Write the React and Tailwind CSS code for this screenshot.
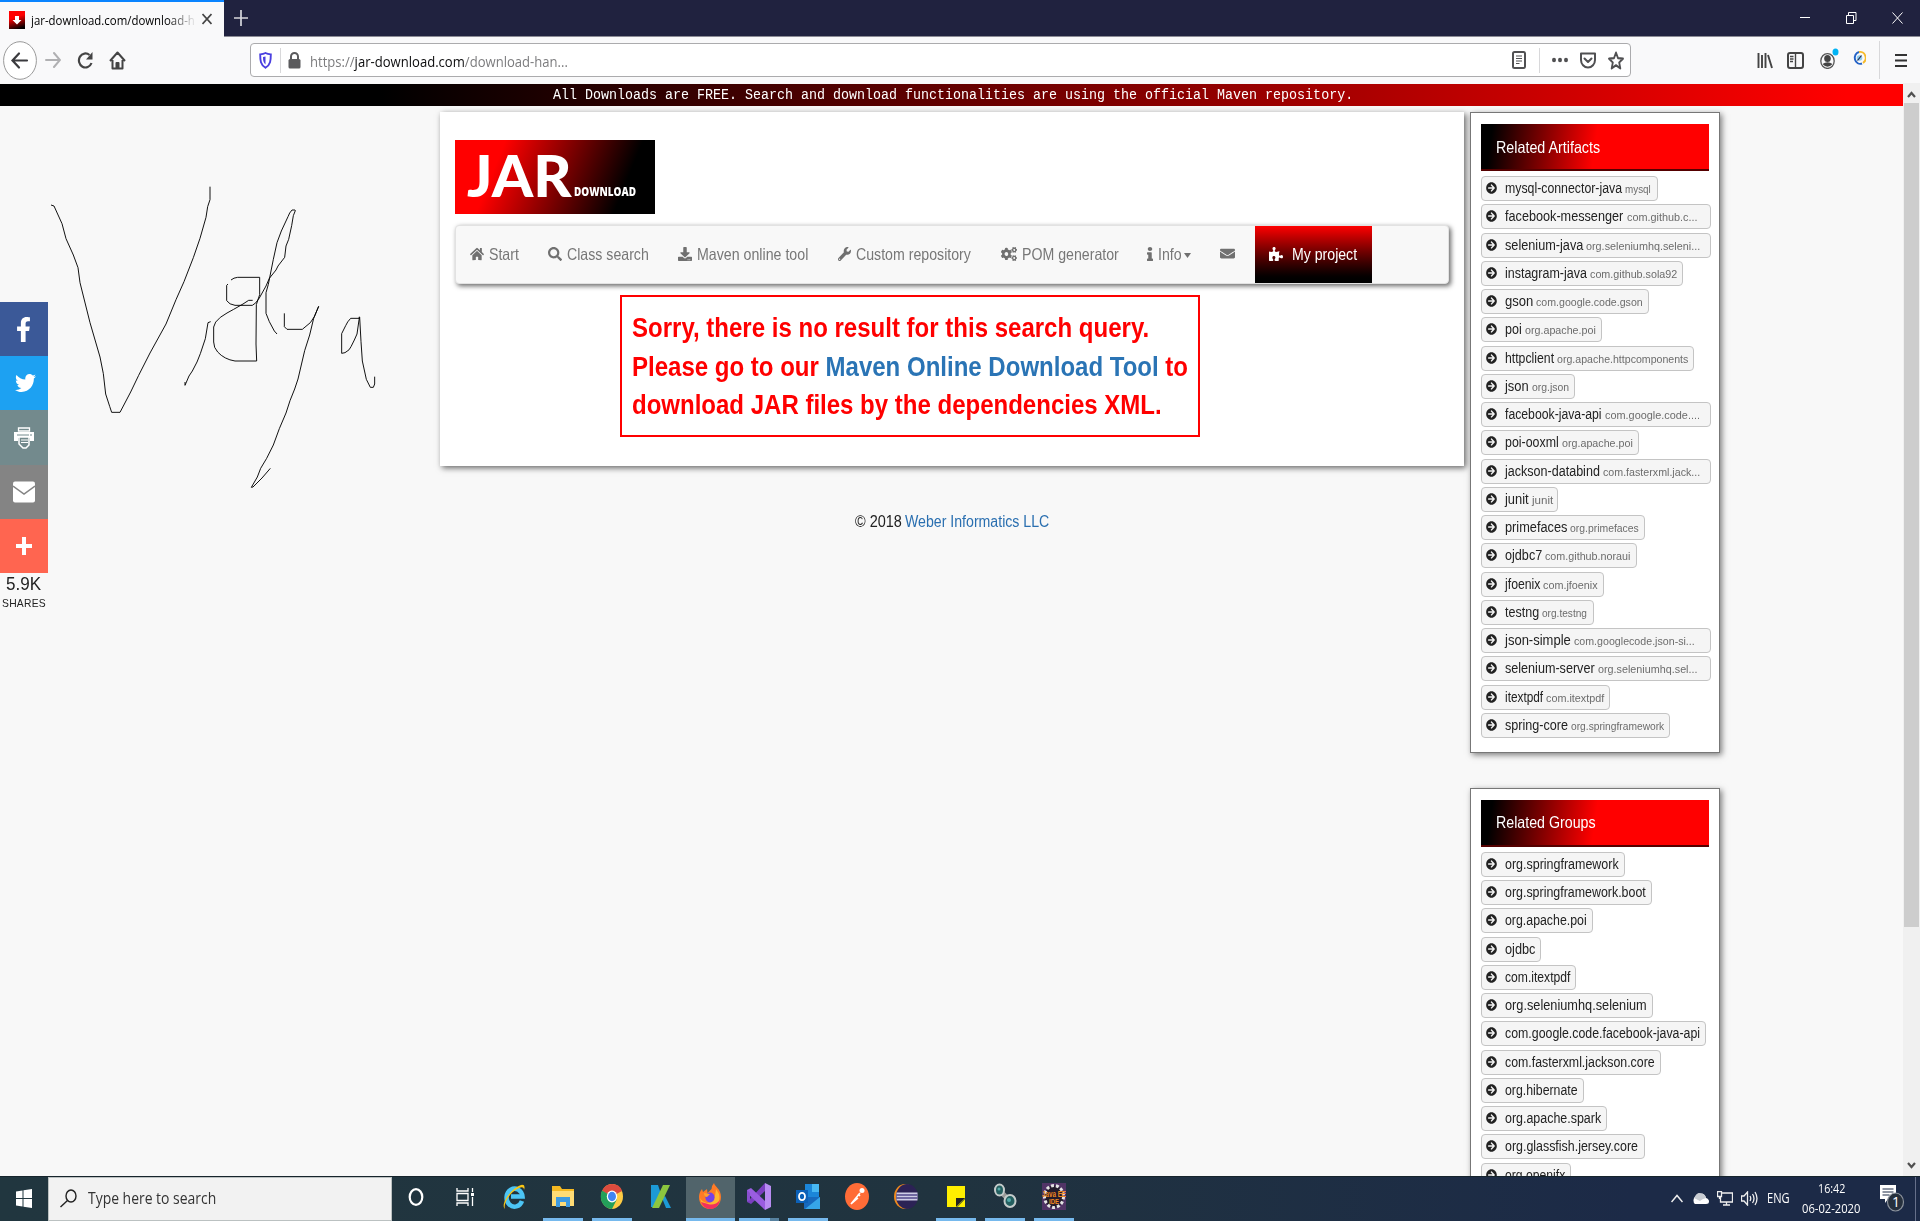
import React, { useLayoutEffect, useRef, useState } from "react";
import {
  FaHome, FaSearch, FaDownload, FaWrench, FaCogs, FaInfo,
  FaEnvelope, FaPuzzlePiece, FaArrowCircleRight, FaFacebookF, FaTwitter,
} from "react-icons/fa";

// Single line of text condensed or stretched to an exact width.
function T({ w, className = "", children }) {
  const ref = useRef(null);
  const [k, setK] = useState(1);
  useLayoutEffect(() => {
    if (ref.current) setK(w / ref.current.offsetWidth);
  }, [w]);
  return (
    <span className={"inline-block shrink-0 whitespace-nowrap " + className} style={{ width: w }}>
      <span ref={ref} className="inline-block origin-left whitespace-nowrap" style={{ transform: `scaleX(${k})` }}>
        {children}
      </span>
    </span>
  );
}

const ui = "font-['Open_Sans','Noto_Sans',sans-serif]";

function TitleBar() {
  return (
    <div className="flex h-[37px] shrink-0 border-b border-[#8b8b95] bg-[#20223f]">
      <div className="-mb-px flex h-[37px] w-[224px] items-center border-t-2 border-[#0a84ff] bg-[#f9f9fa] pb-0.5 pl-[9px]">
        <svg className="mt-0.5 h-[18px] w-4" viewBox="0 0 16 18" preserveAspectRatio="none">
          <defs>
            <linearGradient id="fav" x1="0.3" y1="0" x2="0.6" y2="1">
              <stop offset="0.35" stopColor="#f00" />
              <stop offset="1" stopColor="#000" />
            </linearGradient>
          </defs>
          <rect width="16" height="18" fill="url(#fav)" />
          <path d="M6 5h4v4h2.500L8 13.500 3.500 9H6z" fill="#fff" />
        </svg>
        <div className="ml-1.5 w-[166px] overflow-hidden [mask-image:linear-gradient(to_right,black_82%,transparent)]">
          <T w={164} className={ui + " text-[13.500px] leading-[22px] text-black"}>jar-download.com/download-h</T>
        </div>
        <svg className="ml-[5px] h-3 w-2.5" viewBox="0 0 10 12" preserveAspectRatio="none" stroke="#444" strokeWidth="1.700">
          <path d="M0.500 1l9 10M9.500 1l-9 10" />
        </svg>
      </div>
      <svg className="ml-2.5 mt-[10px] h-4 w-[14px]" viewBox="0 0 14 16" stroke="#d6d6dc" strokeWidth="1.700">
        <path d="M7 0v16M0 8h14" />
      </svg>
      <div className="ml-auto mr-[17px] flex items-center gap-[35px] pb-px">
        <svg className="h-3 w-[11px]" viewBox="0 0 11 12" stroke="#fff"><path d="M0 5.500h10" /></svg>
        <svg className="h-3 w-[11px]" viewBox="0 0 11 12" stroke="#fff" fill="none">
          <path d="M0.500 3.500h7v8h-7zM2.500 3V0.500h7.500v8H8" />
        </svg>
        <svg className="h-3 w-[11px]" viewBox="0 0 11 12" stroke="#fff"><path d="M0.500 0.500l10 11M10.500 0.500l-10 11" /></svg>
      </div>
    </div>
  );
}

function NavBar() {
  return (
    <div className="flex h-[46px] shrink-0 items-center bg-[#f9f9fa]">
      <svg className="ml-[3px] h-[39px] w-[34px]" viewBox="0 0 34 39" fill="none">
        <ellipse cx="17" cy="19.500" rx="16.400" ry="18.800" fill="#fff" stroke="#999" strokeWidth="1" />
        <path d="M24 19.500H10M16 12.500l-6.500 7 6.500 7" stroke="#3a3a3e" strokeWidth="2.200" strokeLinecap="round" />
      </svg>
      <svg className="ml-2 h-[18px] w-4" viewBox="0 0 16 18" fill="none" stroke="#b0b0b2" strokeWidth="2" strokeLinecap="round">
        <path d="M1 9h13M9 2l6 7-6 7" />
      </svg>
      <svg className="ml-4 h-[18px] w-[17px]" viewBox="0 0 17 18" fill="none" stroke="#444" strokeWidth="2.200">
        <path d="M14.500 12A6.500 7 0 1 1 12.500 4" />
        <path d="M15.500 1v7.500H9z" fill="#444" stroke="none" />
      </svg>
      <svg className="ml-[15px] h-[19px] w-[17px]" viewBox="0 0 17 19" fill="none" stroke="#444" strokeWidth="2" strokeLinejoin="round">
        <path d="M1 10l7.500-8.500L16 10M3.500 9v8.500h10V9M7.500 17v-5h2v5" />
      </svg>
      <div className="ml-[124px] flex h-[34px] w-[1381px] items-center rounded-sm border border-[#ababad] bg-white">
        <svg className="ml-2 h-[17px] w-[13px]" viewBox="0 0 13 17" fill="none">
          <path d="M6.500 1C4.500 2 3 2.200 1.200 2.400c0 6 .3 10.500 5.300 13.400 5-2.900 5.300-7.400 5.300-13.400C10 2.200 8.500 2 6.500 1z" stroke="#4a3fe0" strokeWidth="1.900" />
          <path d="M6.500 4.500v8C4.300 10.800 4 8 4 5z" fill="#4a3fe0" />
        </svg>
        <div className="ml-2 h-[25px] w-px bg-[#d8d8da]" />
        <svg className="ml-[7px] h-[17px] w-[13px]" viewBox="0 0 13 17">
          <rect x="0.500" y="7" width="12" height="9.500" rx="1.500" fill="#5b5b5d" />
          <path d="M3 8V4.500a3.500 3.500 0 0 1 7 0V8" fill="none" stroke="#5b5b5d" strokeWidth="2" />
        </svg>
        <T w={258} className={ui + " ml-[9px] mt-px text-[15px] leading-6 text-[#7c7c7e]"}>
          https://<span className="text-[#0c0c0d]">jar-download.com</span>/download-han...
        </T>
        <svg className="ml-auto h-[18px] w-[14px]" viewBox="0 0 14 18" fill="none" stroke="#505052">
          <rect x="1" y="1" width="12" height="16" rx="1.500" strokeWidth="2" />
          <path d="M4 5h6M4 7.500h6M4 10h6M4 12.500h3.500" strokeWidth="1.200" />
        </svg>
        <div className="ml-[13px] h-[25px] w-px bg-[#d8d8da]" />
        <svg className="ml-3 h-[18px] w-4" viewBox="0 0 16 18" fill="#505052">
          <ellipse cx="2" cy="9" rx="2" ry="2.300" /><ellipse cx="8" cy="9" rx="2" ry="2.300" /><ellipse cx="14" cy="9" rx="2" ry="2.300" />
        </svg>
        <svg className="ml-3 h-[17px] w-4" viewBox="0 0 16 17" fill="none" stroke="#505052" strokeWidth="2" strokeLinecap="round" strokeLinejoin="round">
          <path d="M1 1.500h14v6.500a7 7.500 0 0 1-14 0zM4.500 6.500L8 10l3.500-3.500" />
        </svg>
        <svg className="ml-3 mr-1.5 h-[19px] w-4" viewBox="0 0 24 24" preserveAspectRatio="none" fill="none" stroke="#505052" strokeWidth="2.700" strokeLinejoin="round">
          <path d="M12 2l3 7 7.500.6-5.700 5L18.500 22 12 18l-6.500 4 1.700-7.400-5.700-5L9 9z" />
        </svg>
      </div>
      <div className="ml-auto flex items-center">
        <svg className="h-[17px] w-4" viewBox="0 0 16 17" stroke="#444" strokeWidth="2">
          <path d="M1.500 1v15M5 3v13M8.500 1v15M11 3l4 13" strokeWidth="1.900" />
        </svg>
        <svg className="ml-[14px] h-[17px] w-[17px]" viewBox="0 0 17 17" fill="none" stroke="#444" strokeWidth="2">
          <rect x="1" y="1" width="15" height="15" rx="2" /><path d="M8.500 1v15M3 4.500h3.500M3 7h3.500M3 9.500h3" strokeWidth="1.400" />
        </svg>
        <svg className="-mt-[5px] ml-4 h-[22px] w-[19px]" viewBox="0 0 19 22">
          <ellipse cx="7.500" cy="14" rx="6.700" ry="7.400" fill="none" stroke="#555" strokeWidth="1.300" />
          <ellipse cx="7.500" cy="11.500" rx="3.300" ry="3.600" fill="#444" /><path d="M2.500 17q5-3.500 10 0-5 5.500-10 0z" fill="#444" />
          <ellipse cx="15.500" cy="5" rx="3" ry="3.500" fill="#00b3f4" />
        </svg>
        <svg className="-mt-1 ml-[14px] h-[18px] w-[13px]" viewBox="0 0 13 18" fill="none" strokeWidth="1.900">
          <path d="M6 3A5.400 6 0 1 0 9 14.500" stroke="#2463c7" /><path d="M6 3a5.400 6 0 0 1 4 11" stroke="#f6bb2c" />
          <circle cx="6.500" cy="9" r="2.800" fill="#8ecdf0" /><path d="M4.500 11.500l4-5" stroke="#224" strokeWidth="1.200" />
        </svg>
        <div className="ml-[13px] h-[38px] w-px bg-[#d8d8da]" />
        <svg className="ml-[15px] mr-[13px] h-[15px] w-3" viewBox="0 0 12 15" stroke="#333" strokeWidth="2"><path d="M0 2h12M0 7.500h12M0 13h12" /></svg>
      </div>
    </div>
  );
}

function ShareBar() {
  return (
    <div className="mt-[196px] flex w-12 shrink-0 flex-col items-center text-white">
      <div className="flex h-[54px] w-12 items-center justify-center bg-[#3b5998]"><FaFacebookF className="mr-0.5 h-[25px] w-[15px]" preserveAspectRatio="none" /></div>
      <div className="flex h-[54px] w-12 items-center justify-center bg-[#1da1f2]"><FaTwitter className="ml-0.5 h-[22px] w-[21px]" preserveAspectRatio="none" /></div>
      <div className="flex h-[55px] w-12 items-center justify-center bg-[#738a8d]">
        <svg className="h-[22px] w-5" viewBox="0 0 20 22">
          <path d="M4.500 1h11v3h-11z" fill="none" stroke="#fff" strokeWidth="1.300" />
          <path d="M0 5h20v9h-4v-3H4v3H0z" fill="#fff" /><path d="M3 8h12M17 7v2" stroke="#738a8d" />
          <path d="M5 10h10v8l-3 3H9l-4-4z" fill="#738a8d" stroke="#fff" strokeWidth="1.500" />
          <path d="M7 13h7M7 15.500h7" stroke="#fff" strokeWidth="1.200" />
        </svg>
      </div>
      <div className="flex h-[54px] w-12 items-center justify-center bg-[#848484]">
        <svg className="h-[22px] w-[22px]" viewBox="0 0 22 22">
          <rect width="22" height="21" y="0.500" rx="2" fill="#fff" /><path d="M0 5l11 8 11-8" fill="none" stroke="#848484" strokeWidth="1.500" />
        </svg>
      </div>
      <div className="flex h-[54px] w-12 items-center justify-center bg-[#ff6550]">
        <svg className="h-[18px] w-4" viewBox="0 0 16 18" stroke="#fff" strokeWidth="4"><path d="M8 0v18M0 9h16" /></svg>
      </div>
      <T w={35} className="mr-px text-[19px] leading-[22px] text-[#222]">5.9K</T>
      <T w={44} className="mr-px mt-0.5 text-[11.500px] leading-3 tracking-wide text-[#222]">SHARES</T>
    </div>
  );
}

function Signature() {
  return (
    <svg className="pointer-events-none absolute left-0 top-[103px] h-[330px] w-[400px]" viewBox="0 48 1200 990" fill="none" stroke="#000" strokeWidth="2.800">
      <path d="M153 105l9 3 24 53 12 45 22 49 14 38 6 45 10 40 20 80 30 103 10 50 7 61 12 37 6 18h25l32-61 24-50 34-67 48-87 30-73 24-54 28-72 20-58 18-63 5-32 7-21V50" />
      <path d="M632 455l-8 3-8 48-15 45-10 25-14 27-10 15-12 28v-10" />
      <path d="M693 330q8-7 20-8h66v52l-10 30-1 118 2 51h-65q-32-5-52-27-12-13-12-30v-45q2-15 20-29 20-14 40-24l28-16 17-11h12" />
      <path d="M684 342l-4 4v46q8 12 25 14h52q10-4 21-22l20-36 10-23 20-25 6-12 20-26 4-34 8-20 9-41 5-30 6-15-1-2h-9q-8 8-12 20l-20 43-13 35-11 50-15 75-7 25v62l10 25 15 28 8 9" />
      <path d="M853 430v40l8 8h46l24-20 12-18 13-31-15 36-12 50-15 47-20 85-10 30-14 35-12 37-20 47-18 49-20 40-18 30-10 26-18 31 5-1 27-27 25-29" />
      <path d="M1078 440l-1 5h-25q-10 10-15 22l-12 24v59l10-2q15-8 18-18l10-20 8-18 6-42 2-8 4 73 4 58 12 55 12 24h9l4-10v-22" />
    </svg>
  );
}

function Item({ Icon, iw, ml, tw, text }) {
  return (
    <div className="flex items-center" style={{ marginLeft: ml }}>
      <Icon className="h-[14px] shrink-0 text-[#707070]" style={{ width: iw }} preserveAspectRatio="none" />
      <T w={tw} className="ml-[5px] text-[16.500px] leading-6 text-[#777]">{text}</T>
    </div>
  );
}

function MainCard() {
  return (
    <div className="flex h-[354px] w-[1024px] flex-col bg-white pl-[15px] pt-7 shadow-[2px_2px_6px_rgba(0,0,0,0.6)]">
      <div className="flex h-[74px] w-[200px] items-end bg-[linear-gradient(112deg,#f00_22%,#000_82%)] pl-[12px] font-black text-white">
        <T w={105} className="mb-[-1px] font-['Lato'] text-[58px] leading-[80px]">JAR</T>
        <T w={62} className="mb-[14px] ml-0.5 font-['Open_Sans'] text-[12.500px] font-extrabold leading-4">DOWNLOAD</T>
      </div>
      <div className="mt-[11px] flex h-[59px] w-[994px] shrink-0 items-center rounded border border-[#e2e2e2] bg-[#f8f8f8] pb-[2px] shadow-[2px_2px_5px_rgba(0,0,0,0.6)]">
        <Item Icon={FaHome} iw={14} ml={14} tw={30} text="Start" />
        <Item Icon={FaSearch} iw={14} ml={29} tw={81.5} text="Class search" />
        <Item Icon={FaDownload} iw={14} ml={29} tw={111} text="Maven online tool" />
        <Item Icon={FaWrench} iw={13} ml={30} tw={115} text="Custom repository" />
        <Item Icon={FaCogs} iw={16} ml={30} tw={97} text="POM generator" />
        <Item Icon={FaInfo} iw={6} ml={28} tw={24} text="Info" />
        <svg className="ml-0.5 mt-1 h-[5px] w-[7px] fill-[#707070]" viewBox="0 0 7 5"><path d="M0 0h7L3.500 5z" /></svg>
        <FaEnvelope className="ml-[29px] h-[13px] w-[15px] text-[#707070]" preserveAspectRatio="none" />
        <div className="-mb-[2px] ml-5 flex h-[57px] w-[117px] items-center bg-gradient-to-b from-[#f00] to-black pb-[2px] text-white">
          <FaPuzzlePiece className="ml-3.5 h-[14px] w-3.5" preserveAspectRatio="none" />
          <T w={65} className="ml-[9px] text-[16.500px] leading-6">My project</T>
        </div>
      </div>
      <div className="ml-[165px] mt-[11px] flex h-[142px] w-[580px] shrink-0 flex-col border-2 border-[#f00] pl-[10px] pt-[12px] text-[27px] font-bold leading-[38.700px] text-[#f00]">
        <T w={517}>Sorry, there is no result for this search query.</T>
        <T w={556}>Please go to our <span className="text-[#2a74b5]">Maven Online Download Tool</span> to</T>
        <T w={530}>download JAR files by the dependencies XML.</T>
      </div>
    </div>
  );
}

// name, group, chip width, name width, group width
const artifacts = [
  ["mysql-connector-java", "mysql", 177, 117, 26],
  ["facebook-messenger", "com.github.c...", 230, 118.500, 71],
  ["selenium-java", "org.seleniumhq.seleni...", 230, 78, 114],
  ["instagram-java", "com.github.sola92", 202, 82, 87],
  ["gson", "com.google.code.gson", 168, 28, 107],
  ["poi", "org.apache.poi", 121, 17, 71],
  ["httpclient", "org.apache.httpcomponents", 213, 49, 131],
  ["json", "org.json", 94, 24, 37],
  ["facebook-java-api", "com.google.code....", 230, 97, 95],
  ["poi-ooxml", "org.apache.poi", 158, 54, 71],
  ["jackson-databind", "com.fasterxml.jack...", 230, 95, 97],
  ["junit", "junit", 77, 24, 21],
  ["primefaces", "org.primefaces", 164, 62, 69],
  ["ojdbc7", "com.github.noraui", 156, 37, 85],
  ["jfoenix", "com.jfoenix", 123, 35, 55],
  ["testng", "org.testng", 113, 34, 45],
  ["json-simple", "com.googlecode.json-si...", 230, 66, 121],
  ["selenium-server", "org.seleniumhq.sel...", 230, 90, 100],
  ["itextpdf", "com.itextpdf", 129, 38, 58],
  ["spring-core", "org.springframework", 189, 63, 93],
];

const groups = [
  ["org.springframework", null, 144, 114],
  ["org.springframework.boot", null, 171, 141],
  ["org.apache.poi", null, 112, 82],
  ["ojdbc", null, 60, 30],
  ["com.itextpdf", null, 95, 65],
  ["org.seleniumhq.selenium", null, 172, 142],
  ["com.google.code.facebook-java-api", null, 225, 195],
  ["com.fasterxml.jackson.core", null, 180, 150],
  ["org.hibernate", null, 103, 73],
  ["org.apache.spark", null, 126, 96],
  ["org.glassfish.jersey.core", null, 164, 133],
  ["org.openifx", null, 90, 60],
];

function Panel({ title, tw, items }) {
  return (
    <div className="w-[250px] shrink-0 border border-[#777] bg-white pb-[14px] pl-2.5 pt-[11px] shadow-[2px_2px_6px_rgba(0,0,0,0.5)]">
      <div className="flex h-[47px] w-[228px] items-center border-b-2 border-[#500] bg-[linear-gradient(98deg,#000_5%,#f00_50%)] pl-[15px] text-white">
        <T w={tw} className="text-[16.500px] leading-6">{title}</T>
      </div>
      <div className="mt-[5px] flex flex-col gap-[3.250px]">
        {items.map(([name, group, w, nw, gw]) => (
          <div key={name} className="flex h-[25px] items-center rounded-sm border border-[#c4c4c4] bg-[#f5f5f5] pb-px pl-1" style={{ width: w }}>
            <FaArrowCircleRight className="h-3 w-[11px] shrink-0 text-[#222]" preserveAspectRatio="none" />
            <div className="ml-2 flex items-baseline">
              <T w={nw} className="text-[14px] leading-[22px] text-[#222]">{name}</T>
              {group && <T w={gw} className="ml-[3px] text-[11px] leading-4 text-[#6c6c6c]">{group}</T>}
            </div>
          </div>
        ))}
      </div>
    </div>
  );
}

function Page() {
  return (
    <div className="flex h-[1093px] shrink-0 bg-[#f8f8f8] font-['Liberation_Sans',Arial,sans-serif]">
      <div className="relative flex w-[1903px] flex-col overflow-hidden">
        <div className="mt-px flex h-[22px] shrink-0 items-center justify-center bg-[linear-gradient(90deg,#000_20%,#f00_97%)] pl-[3px]">
          <T w={800} className="font-['Liberation_Mono','Courier_New',monospace] text-[14px] leading-5 text-white">
            All Downloads are FREE. Search and download functionalities are using the official Maven repository.
          </T>
        </div>
        <div className="flex items-start">
          <ShareBar />
          <div className="ml-[392px] mt-1.5 flex flex-col">
            <MainCard />
            <div className="mt-11 flex justify-center text-[16px] leading-6 text-[#222]">
              <T w={47}>© 2018</T>
              <T w={144} className="ml-[3.500px] text-[#2a6fb0]">Weber Informatics LLC</T>
            </div>
          </div>
          <div className="ml-1.5 mt-1.5 flex flex-col gap-[35px]">
            <Panel title="Related Artifacts" tw={104} items={artifacts} />
            <Panel title="Related Groups" tw={100} items={groups} />
          </div>
        </div>
        <Signature />
      </div>
      <div className="flex w-[17px] flex-col items-center justify-between bg-[#f0f0f0]">
        <svg className="mt-[8px] h-[7px] w-[9px]" viewBox="0 0 9 7" fill="none" stroke="#505050" strokeWidth="2.200"><path d="M1 6l3.500-4L8 6" /></svg>
        <div className="mb-auto mt-[5px] h-[824px] w-[15px] bg-[#cdcdcd]" />
        <svg className="mb-[7px] h-[7px] w-[9px]" viewBox="0 0 9 7" fill="none" stroke="#505050" strokeWidth="2.200"><path d="M1 1l3.500 4L8 1" /></svg>
      </div>
    </div>
  );
}

const I = ({ children, w = 24 }) => (
  <svg className="h-[27px]" style={{ width: w }} viewBox="0 0 24 27" preserveAspectRatio="none">{children}</svg>
);

const apps = [
  [<I><ellipse cx="12" cy="14" rx="6.300" ry="7.800" fill="none" stroke="#fff" strokeWidth="2.200" /></I>, 0],
  [<I><path d="M4 5v3h11V5M4 23v-3h11v3M4 10.500h11v7H4zM19.500 5v4M19.500 14v9" fill="none" stroke="#fff" strokeWidth="1.300" /><path d="M18 10h3v3h-3z" fill="#fff" /></I>, 0],
  [<I><path d="M20 18A8 9 0 1 1 20.500 13.500H9" fill="none" stroke="#4cc5f5" strokeWidth="4.500" /><path d="M3 26C-2 22 8 6 19 2q5-1 3 5 0-4-5-2C8 9 1 20 3 26z" fill="#fbc615" /></I>, 0],
  [<I><path d="M1 3h8l2 3h12v17H1z" fill="#f5b921" /><path d="M1 8h22v15H1z" fill="#ffdc75" /><path d="M5 14h14v10h-4v-5H9v5H5z" fill="#3f9be0" /></I>, 1],
  [<I><ellipse cx="12" cy="13.500" rx="11" ry="12.500" fill="#fc4" /><path d="M12 13.500L2 8Q5 1 12 1q8 0 10 7z" fill="#dd4b3e" /><path d="M12 13.500L2 7.500Q-1 15 3 21q3 4.500 9 5l5-10z" fill="#24a05a" /><ellipse cx="12" cy="13.500" rx="5.200" ry="6" fill="#fff" /><ellipse cx="12" cy="13.500" rx="4" ry="4.700" fill="#4285f4" /></I>, 1],
  [<I><path d="M2 2h7l3 9-5 13H2z" fill="#1c9ad6" /><path d="M13 15l3-2 6 12h-5z" fill="#1c9ad6" /><path d="M14 2h7L10 25H3z" fill="#8cc63f" /></I>, 0],
  [<I><path d="M12 26C5 26 1 20.500 1 14c0-3 1-6 3-8l1 3 4-3 .5 4 4-4Q14 2 16 0c1 4 7 6 7 14 0 7-5 12-11 12z" fill="#ff7a26" /><path d="M12 24c7 0 11-6 9-13l-3-5q-1 14-9 14-5-1-7-5 1 8 10 9z" fill="#ffb52e" /><path d="M3 19q3 7 9 7 8 0 10-9-5 6-12 4z" fill="#f2305e" /><ellipse cx="12" cy="14.500" rx="4.600" ry="5" fill="#7542e5" /><path d="M6 10l6 1-3 3q-3 0-3-4z" fill="#ffa22b" /></I>, 2],
  [<I><path d="M18 0l6 3v21l-6 3z" fill="#b98cf2" /><path d="M18 0v8L4 21l-4-2 3-3z" fill="#7b3fc0" /><path d="M0 7l4-2 14 13v9L0 10z" fill="#9a5de0" /><path d="M0 7l3 3v7l-3 2z" fill="#8a4fd0" /></I>, 3],
  [<I><path d="M9 1h14v15H9z" fill="#1b86d9" /><path d="M16 1h7v8h-7z" fill="#48b8f2" /><path d="M8 14h16v12H8z" fill="#1769bd" /><path d="M24 14v12H9z" fill="#36a5e8" /><path d="M0 7h12v13H0z" fill="#0c61b8" /><ellipse cx="6" cy="13.500" rx="3" ry="3.700" fill="none" stroke="#fff" strokeWidth="1.800" /></I>, 1],
  [<I><ellipse cx="12" cy="13.500" rx="12" ry="13.500" fill="#ff6c37" /><path d="M6 21l9-11M13 11l2 2M6 21l7-6" stroke="#fff" strokeWidth="1.600" /><circle cx="17" cy="7.500" r="2.500" fill="#fff" /></I>, 0],
  [<I><ellipse cx="11" cy="13.500" rx="11" ry="12.500" fill="#f08a1d" /><ellipse cx="13" cy="13.500" rx="11" ry="12.500" fill="#2c2255" /><path d="M2.500 9.500h21v8h-21z" fill="#cfcde6" /><path d="M2.500 12h21M2.500 15h21" stroke="#51478a" strokeWidth="1.300" /></I>, 0],
  [<I><path d="M3 3h18v12l-8 9H3z" fill="#ffef00" /><path d="M12 24v-9h9z" fill="#222" /><path d="M13.500 24H21v-8z" fill="#ffef00" /></I>, 1],
  [<I><path d="M7 8l10 10" stroke="#999" strokeWidth="5" /><ellipse cx="6.500" cy="7" rx="4.500" ry="5.500" fill="#245f60" stroke="#c5cccc" strokeWidth="2" /><ellipse cx="17" cy="18" rx="5.500" ry="6" fill="#245f60" stroke="#c5cccc" strokeWidth="2" /><circle cx="16" cy="17" r="2" fill="#5aa" /><circle cx="6" cy="6" r="1.500" fill="#5aa" /></I>, 1],
  [<I><path d="M0 0h24v27H0z" fill="#513466" /><ellipse cx="12" cy="13.500" rx="9.500" ry="11" fill="#231b2b" stroke="#e5e5e5" strokeWidth="3" strokeDasharray="3 2" /><text x="0" y="13.500" fontSize="8.500" textLength="24" lengthAdjust="spacingAndGlyphs" fontWeight="bold" fill="#f28a20" fontFamily="Liberation Sans">Java EE</text><text x="7" y="20.500" fontSize="8" fontWeight="bold" textLength="10" lengthAdjust="spacingAndGlyphs" fill="#f28a20" fontFamily="Liberation Sans">IDE</text></I>, 1],
];

function Taskbar() {
  return (
    <div className={ui + " flex h-[45px] shrink-0 items-stretch border-t border-[#16242c] bg-[linear-gradient(90deg,#21363f,#20333f_50%,#1c2a47_85%)]"}>
      <div className="flex w-12 items-center justify-center pb-0.5">
        <svg className="h-[19px] w-4" viewBox="0 0 16 19" fill="#fff"><path d="M0 2.500L6.500 1.500V9H0zM7.500 1.300L16 0v9H7.500zM0 10h6.500v7.500L0 16.500zM7.500 10H16v9l-8.500-1.300z" /></svg>
      </div>
      <div className="flex w-[344px] items-center border border-[#bbc1c1] bg-[#f2f2f2] pb-0.5 pl-[11px]">
        <svg className="h-[19px] w-[17px]" viewBox="0 0 17 19" fill="none" stroke="#222" strokeWidth="1.400"><ellipse cx="11" cy="7" rx="5" ry="6" /><path d="M7.500 11.500L0.500 18" /></svg>
        <T w={128} className="ml-[11px] text-[16px] leading-6 text-[#333]">Type here to search</T>
      </div>
      <div className="-ml-px flex">
        {apps.map(([icon, state], i) => (
          <div key={i} className={"flex h-[44px] w-[49.100px] flex-col items-center justify-end " + (state === 2 ? "bg-[#51646b]" : "")}>
            <div className="mb-[8px] h-[27px]">{icon}</div>
            <div className={"h-[3px] shrink-0 " + (state === 0 ? "w-10" : state === 2 ? "w-full bg-[#76b9ed]" : state === 3 ? "w-10 bg-[linear-gradient(90deg,#76b9ed_78%,#56819f_78%)]" : "w-10 bg-[#76b9ed]")} />
          </div>
        ))}
      </div>
      <div className="ml-auto flex items-center pb-0.5 text-white">
        <svg className="h-[9px] w-3" viewBox="0 0 12 9" fill="none" stroke="#eee" strokeWidth="1.500"><path d="M0.500 8L6 1.500 11.500 8" /></svg>
        <svg className="ml-[10px] h-[13px] w-4" viewBox="0 0 16 13"><path d="M2 12a3 4 0 0 1 0-7Q4 0 8 1.500q4 0 5 4.500 3 1 3 3.500T13 12z" fill="#fff" /><path d="M1 6Q4 0 8 1.500q4 0 5 4.500-4 1-6 3z" fill="#c8ccd2" /></svg>
        <svg className="ml-2 h-[15px] w-4" viewBox="0 0 16 15" fill="none" stroke="#eee" strokeWidth="1.300"><path d="M5 2h10.500v9H3.500V6M6 14h7M9.500 11v3M0.500 0.500h4v5h-4zM2.500 5v3" /></svg>
        <svg className="ml-2 h-[15px] w-[17px]" viewBox="0 0 17 15" fill="none" stroke="#eee" strokeWidth="1.300"><path d="M0.500 5h2.500l3.500-4v13L3 10H0.500zM9 5q1.500 2.500 0 5M11.500 3q3 4.500 0 9M14 1q4 6.500 0 13" /></svg>
        <T w={23} className="ml-[9px] text-[14px] leading-5">ENG</T>
        <div className="ml-[12px] flex w-[58px] flex-col items-center text-[13.500px] leading-5">
          <T w={27}>16:42</T>
          <T w={58}>06-02-2020</T>
        </div>
        <svg className="ml-[19px] mr-[10px] h-[30px] w-[26px]" viewBox="0 0 26 30">
          <path d="M1 2h16v14H9l-3 4v-4H1z" fill="#fff" /><path d="M3.500 6h11M3.500 9h11M3.500 12h7" stroke="#1c2a47" strokeWidth="1.200" />
          <ellipse cx="16.500" cy="19" rx="8" ry="9" fill="#26303d" stroke="#8b929c" strokeWidth="1.200" />
          <text x="13" y="24" fontSize="14" fill="#fff" fontFamily="Open Sans">1</text>
        </svg>
      </div>
      <div className="mr-1 w-px bg-[#66708a]" />
    </div>
  );
}

export default function App() {
  return (
    <div className="flex h-[1221px] w-[1920px] flex-col overflow-hidden bg-[#f8f8f8]">
      <TitleBar />
      <NavBar />
      <Page />
      <Taskbar />
    </div>
  );
}
